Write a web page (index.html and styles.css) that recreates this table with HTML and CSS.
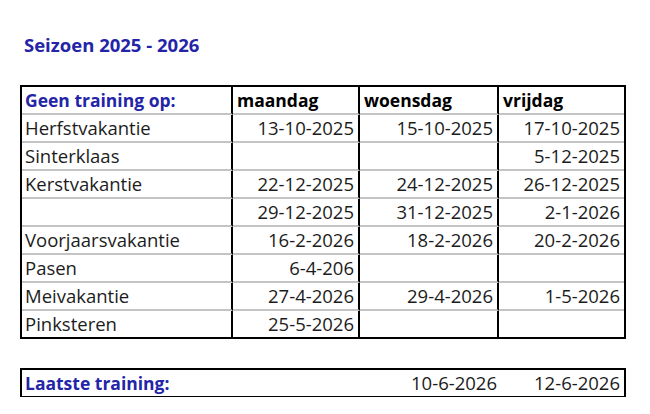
FILE: index.html
```html
<!DOCTYPE html>
<html>
<head>
<meta charset="utf-8">
<link rel="stylesheet" href="styles.css">
</head>
<body>
<div class="page">
  <h1 class="title">Seizoen 2025 - 2026</h1>
  <div class="grid">
    <div class="c c1 hd blue">Geen training op:</div>
    <div class="c c2 hd">maandag</div>
    <div class="c c3 hd">woensdag</div>
    <div class="c c4 hd">vrijdag</div>

    <div class="c c1">Herfstvakantie</div>
    <div class="c c2 r">13-10-2025</div>
    <div class="c c3 r">15-10-2025</div>
    <div class="c c4 r">17-10-2025</div>

    <div class="c c1">Sinterklaas</div>
    <div class="c c2 r"></div>
    <div class="c c3 r"></div>
    <div class="c c4 r">5-12-2025</div>

    <div class="c c1">Kerstvakantie</div>
    <div class="c c2 r">22-12-2025</div>
    <div class="c c3 r">24-12-2025</div>
    <div class="c c4 r">26-12-2025</div>

    <div class="c c1"></div>
    <div class="c c2 r">29-12-2025</div>
    <div class="c c3 r">31-12-2025</div>
    <div class="c c4 r">2-1-2026</div>

    <div class="c c1">Voorjaarsvakantie</div>
    <div class="c c2 r">16-2-2026</div>
    <div class="c c3 r">18-2-2026</div>
    <div class="c c4 r">20-2-2026</div>

    <div class="c c1">Pasen</div>
    <div class="c c2 r">6-4-206</div>
    <div class="c c3 r"></div>
    <div class="c c4 r"></div>

    <div class="c c1">Meivakantie</div>
    <div class="c c2 r">27-4-2026</div>
    <div class="c c3 r">29-4-2026</div>
    <div class="c c4 r">1-5-2026</div>

    <div class="c c1 last">Pinksteren</div>
    <div class="c c2 r last">25-5-2026</div>
    <div class="c c3 r last"></div>
    <div class="c c4 r last"></div>
  </div>

  <div class="grid grid2">
    <div class="c c1 hd blue">Laatste training:</div>
    <div class="c c2 r"></div>
    <div class="c c3 r">10-6-2026</div>
    <div class="c c4 r">12-6-2026</div>
  </div>
</div>
</body>
</html>
```
FILE: styles.css
```css
html, body {
  margin: 0;
  padding: 0;
  background: #ffffff;
}
body {
  font-family: "Open Sans", Lato, sans-serif;
  color: #1c1c1c;
  width: 650px;
  height: 414px;
  overflow: hidden;
}
.page {
  padding: 34px 0 0 20px;
}
.title {
  margin: 0 0 0 4px;
  font-size: 18.5px;
  line-height: 22px;
  font-weight: bold;
  color: #2424a8;
}
.grid {
  margin-top: 29px;
  width: 602px;
  border: 2px solid #000;
  display: grid;
  grid-template-columns: 211px 127px 139px 125px;
}
.c {
  height: 26px;
  line-height: 26px;
  font-size: 18.5px;
  border-bottom: 2px solid #c4c4c4;
  padding: 0 4px 0 4px;
  white-space: nowrap;
  overflow: hidden;
}
.c1, .c2, .c3 {
  border-right: 2px solid #000;
}
.c1 { padding-left: 3px; }
.r { text-align: right; }
.hd { font-weight: bold; color: #000; font-size: 17.5px; }
.blue { color: #2424a8; }
.last { border-bottom: none; }
.grid2 {
  margin-top: 29px;
  border-bottom: 1px solid #000;
}
.grid2 .c {
  border-right: none;
  border-bottom: none;
}
.grid2 .hd { color: #2424a8; }
.grid2 .c3 { padding-right: 2px; }
```
